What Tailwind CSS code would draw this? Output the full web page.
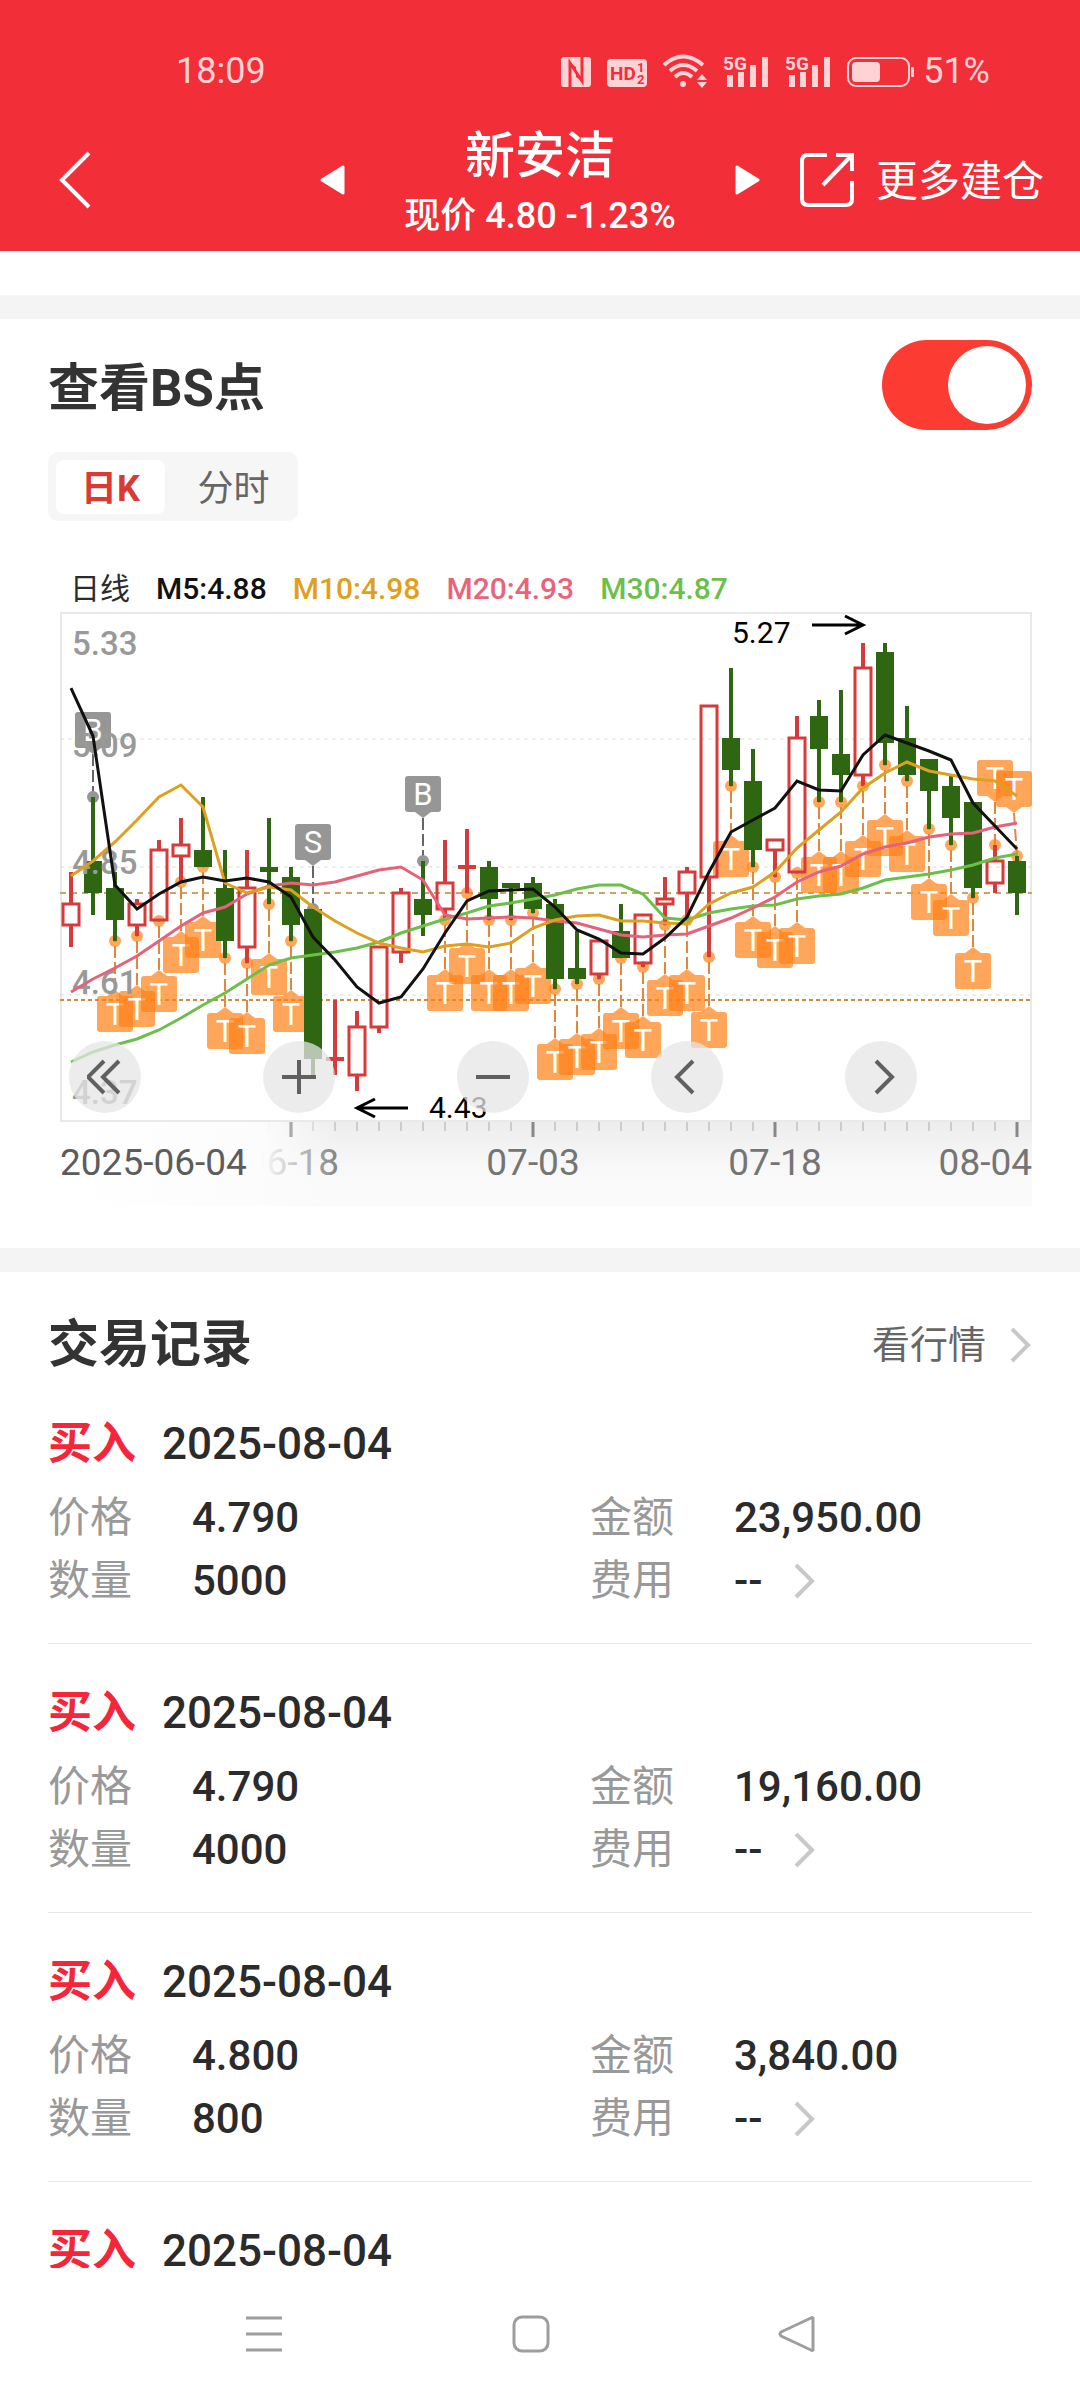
<!DOCTYPE html>
<html lang="zh-CN">
<head>
<meta charset="utf-8">
<meta name="viewport" content="width=device-width, initial-scale=1">
<title>新安洁</title>
<script src="https://cdn.jsdelivr.net/npm/@tailwindcss/browser@4"></script>
</head>
<body class="flex h-screen flex-col bg-white font-['Roboto','Noto_Sans_CJK_SC',sans-serif] text-[#2b2b2b]">

<header class="shrink-0 bg-[#f22f38] text-white">
  <div class="flex h-28 items-center justify-between pt-[30px] pr-[90px] pl-44 text-[36px] text-[#ffd3d5]">
    <time>18:09</time>
    <div class="flex items-center gap-4">
      <svg class="h-[34px] w-[30px]" viewBox="0 0 30 34" aria-label="NFC">
        <rect y="3" width="30" height="30" rx="3" fill="#ffd3d5"/>
        <path d="M9 33V9L21 27V3" fill="none" stroke="#f22f38" stroke-width="3"/>
        <path d="M9 9l6 4v6zM21 27l-6-4v-6z" fill="#f22f38"/>
      </svg>
      <svg class="h-[34px] w-10" viewBox="0 0 40 34" font-weight="700" fill="#f22f38" aria-label="HD">
        <rect y="5" width="40" height="28" rx="4" fill="#ffd3d5"/>
        <text x="3" y="26" font-size="19">HD</text>
        <text x="30" y="18" font-size="13">1</text>
        <text x="30" y="30" font-size="13">2</text>
      </svg>
      <svg class="h-[34px] w-11" viewBox="0 0 44 34" fill="none" stroke="#ffd3d5" stroke-width="4" aria-label="Wi-Fi">
        <path d="M1 11Q20-6 40 11M7 17Q20 5 34 17M12 23Q20 15 29 23"/>
        <circle cx="20" cy="30" r="3" fill="#ffd3d5" stroke="none"/>
        <path d="M34 26h10l-5-6zM34 28h10l-5 6z" fill="#ffd3d5" stroke="none"/>
      </svg>
      <svg class="h-[34px] w-[46px]" viewBox="0 0 46 34" fill="#ffd3d5" aria-label="5G">
        <text x="0" y="16" font-size="19" font-weight="700">5G</text>
        <path d="M4 21h6v12H4zM15 18h6v15h-6zM27 11h6v22h-6zM39 3h6v30h-6z"/>
      </svg>
      <svg class="h-[34px] w-[46px]" viewBox="0 0 46 34" fill="#ffd3d5" aria-label="5G">
        <text x="0" y="16" font-size="19" font-weight="700">5G</text>
        <path d="M4 21h6v12H4zM15 18h6v15h-6zM27 11h6v22h-6zM39 3h6v30h-6z"/>
      </svg>
      <div class="flex items-center gap-2">
        <svg class="h-[34px] w-[68px]" viewBox="0 0 68 34" fill="#ffd3d5" aria-label="电量">
          <rect x="1" y="4" width="61" height="28" rx="8" fill="none" stroke="#ffd3d5" stroke-width="2"/>
          <rect x="5" y="8" width="28" height="20" rx="4"/>
          <rect x="64" y="13" width="3" height="10" rx="1"/>
        </svg>
        <span>51%</span>
      </div>
    </div>
  </div>
  <div class="grid h-[139px] grid-cols-[1fr_auto_1fr] items-center pb-1">
    <button class="ml-[58px] w-9" aria-label="返回">
      <svg class="h-[58px] w-9" viewBox="0 0 36 58" fill="none" stroke="#fff" stroke-width="4"><path d="M31 2L4 29l27 27"/></svg>
    </button>
    <div class="flex w-[440px] items-center justify-between">
      <button aria-label="上一只"><svg class="h-[30px] w-[25px]" viewBox="0 0 25 30" fill="#fff" stroke="#fff" stroke-width="3" stroke-linejoin="round"><path d="M23 2v26L2 15z"/></svg></button>
      <div class="pt-3 text-center">
        <h1 class="text-[50px] leading-[60px] font-medium">新安洁</h1>
        <p class="text-[36px] leading-[60px] font-medium">现价 4.80 -1.23%</p>
      </div>
      <button aria-label="下一只"><svg class="h-[30px] w-[25px]" viewBox="0 0 25 30" fill="#fff" stroke="#fff" stroke-width="3" stroke-linejoin="round"><path d="M2 2v26L23 15z"/></svg></button>
    </div>
    <button class="flex items-center justify-end gap-[22px] pr-9 text-[42px] leading-[60px]">
      <svg class="h-14 w-[54px]" viewBox="0 0 54 56" fill="none" stroke="#fff" stroke-width="4"><path d="M27 3H8q-6 0-6 6v38q0 6 6 6h38q6 0 6-6V29M36 3h16v16M52 3L23 33"/></svg>
      <span class="pt-1">更多建仓</span>
    </button>
  </div>
</header>

<main class="min-h-0 flex-1 overflow-y-auto [scrollbar-width:none]">
  <div class="h-11"></div>
  <div class="h-6 bg-[#f4f4f4]"></div>

  <section class="px-12 pt-[21px] pb-[42px]">
    <div class="flex items-center justify-between">
      <label for="bs" class="pt-2 text-[51px] leading-[60px] font-bold text-[#333]">查看BS点</label>
      <input id="bs" type="checkbox" role="switch" checked class="relative h-[90px] w-[150px] appearance-none rounded-full bg-gray-300 before:absolute before:top-[6px] before:left-[6px] before:size-[78px] before:rounded-full before:bg-white checked:bg-[#fc3c32] checked:before:left-[66px]">
    </div>
    <div class="mt-[22px] flex h-[69px] w-[250px] items-center rounded-[10px] bg-[#f6f6f6] px-2 text-[36px]">
      <button class="h-[54px] w-[109px] rounded-lg bg-white pt-1 leading-[50px] font-bold text-[#d93a34]">日K</button>
      <button class="h-[54px] flex-1 pt-1 pl-3 leading-[50px] text-[#666]">分时</button>
    </div>
    <div class="mt-[43px] ml-3">
      <div class="flex h-12 items-center gap-[26px] pl-[10px] text-[30px] font-medium">
        <span class="font-normal">日线</span>
        <span class="text-[#111]">M5:4.88</span>
        <span class="text-[#e0a01a]">M10:4.98</span>
        <span class="text-[#e8647b]">M20:4.93</span>
        <span class="text-[#6cbf4b]">M30:4.87</span>
      </div>
      <div class="relative">
        <svg id="chart" class="block w-full" viewBox="60 612 972 594" role="img" aria-label="日K线图"></svg>
        <div class="absolute inset-x-0 top-[429px] flex justify-between pr-[115px] pl-[9px]">
          <button class="flex size-[72px] items-center justify-center rounded-full bg-[#e6e6e6]/75" aria-label="最早"><svg class="size-9" viewBox="0 0 36 36" fill="none" stroke="#606060" stroke-width="4"><path d="M17 2L1 18l16 16M32 2L16 18l16 16"/></svg></button>
          <button class="flex size-[72px] items-center justify-center rounded-full bg-[#e6e6e6]/75" aria-label="放大"><svg class="size-9" viewBox="0 0 36 36" fill="none" stroke="#606060" stroke-width="4"><path d="M1 18h34M18 1v34"/></svg></button>
          <button class="flex size-[72px] items-center justify-center rounded-full bg-[#e6e6e6]/75" aria-label="缩小"><svg class="size-9" viewBox="0 0 36 36" fill="none" stroke="#606060" stroke-width="4"><path d="M1 18h34"/></svg></button>
          <button class="flex size-[72px] items-center justify-center rounded-full bg-[#e6e6e6]/75" aria-label="左移"><svg class="size-9" viewBox="0 0 36 36" fill="none" stroke="#606060" stroke-width="4"><path d="M24 2L8 18l16 16"/></svg></button>
          <button class="flex size-[72px] items-center justify-center rounded-full bg-[#e6e6e6]/75" aria-label="右移"><svg class="size-9" viewBox="0 0 36 36" fill="none" stroke="#606060" stroke-width="4"><path d="M13 2l16 16-16 16"/></svg></button>
        </div>
      </div>
    </div>
  </section>

  <div class="h-6 bg-[#f4f4f4]"></div>

  <section class="px-12 pt-[43px]">
    <div class="flex h-[60px] items-center justify-between">
      <h2 class="text-[51px] leading-[60px] font-bold text-[#333]">交易记录</h2>
      <a href="#" class="flex items-center gap-6 text-[38px] leading-[60px] text-[#666]">看行情
        <svg class="h-9 w-[22px]" viewBox="0 0 22 36" fill="none" stroke="#c8c8c8" stroke-width="4"><path d="M2 2l16 16L2 34"/></svg>
      </a>
    </div>

    <article class="border-b border-[#e8e8e8] pt-[37px] pb-[31px] text-[42px] font-medium">
      <h3 class="flex h-16 items-center gap-[26px] text-[44px]"><span class="font-bold text-[#f5263a]">买入</span><time>2025-08-04</time></h3>
      <dl class="mt-[10px] grid grid-cols-[144px_398px_144px_1fr] items-center leading-[63px]">
        <dt class="font-normal text-[#999]">价格</dt><dd>4.790</dd>
        <dt class="font-normal text-[#999]">金额</dt><dd>23,950.00</dd>
        <dt class="font-normal text-[#999]">数量</dt><dd>5000</dd>
        <dt class="font-normal text-[#999]">费用</dt><dd><button class="flex items-center"><span class="w-[60px] text-left">--</span><svg class="h-9 w-[22px]" viewBox="0 0 22 36" fill="none" stroke="#c8c8c8" stroke-width="4"><path d="M2 2l16 16L2 34"/></svg></button></dd>
      </dl>
    </article>

    <article class="border-b border-[#e8e8e8] pt-[37px] pb-[31px] text-[42px] font-medium">
      <h3 class="flex h-16 items-center gap-[26px] text-[44px]"><span class="font-bold text-[#f5263a]">买入</span><time>2025-08-04</time></h3>
      <dl class="mt-[10px] grid grid-cols-[144px_398px_144px_1fr] items-center leading-[63px]">
        <dt class="font-normal text-[#999]">价格</dt><dd>4.790</dd>
        <dt class="font-normal text-[#999]">金额</dt><dd>19,160.00</dd>
        <dt class="font-normal text-[#999]">数量</dt><dd>4000</dd>
        <dt class="font-normal text-[#999]">费用</dt><dd><button class="flex items-center"><span class="w-[60px] text-left">--</span><svg class="h-9 w-[22px]" viewBox="0 0 22 36" fill="none" stroke="#c8c8c8" stroke-width="4"><path d="M2 2l16 16L2 34"/></svg></button></dd>
      </dl>
    </article>

    <article class="border-b border-[#e8e8e8] pt-[37px] pb-[31px] text-[42px] font-medium">
      <h3 class="flex h-16 items-center gap-[26px] text-[44px]"><span class="font-bold text-[#f5263a]">买入</span><time>2025-08-04</time></h3>
      <dl class="mt-[10px] grid grid-cols-[144px_398px_144px_1fr] items-center leading-[63px]">
        <dt class="font-normal text-[#999]">价格</dt><dd>4.800</dd>
        <dt class="font-normal text-[#999]">金额</dt><dd>3,840.00</dd>
        <dt class="font-normal text-[#999]">数量</dt><dd>800</dd>
        <dt class="font-normal text-[#999]">费用</dt><dd><button class="flex items-center"><span class="w-[60px] text-left">--</span><svg class="h-9 w-[22px]" viewBox="0 0 22 36" fill="none" stroke="#c8c8c8" stroke-width="4"><path d="M2 2l16 16L2 34"/></svg></button></dd>
      </dl>
    </article>

    <article class="pt-[37px] font-medium">
      <h3 class="flex h-16 items-center gap-[26px] text-[44px]"><span class="font-bold text-[#f5263a]">买入</span><time>2025-08-04</time></h3>
    </article>
  </section>
</main>

<nav class="flex h-[132px] shrink-0 items-center justify-between bg-white pr-[264px] pl-[245px]">
  <button aria-label="最近任务"><svg class="size-[38px]" viewBox="0 0 38 38" stroke="#9e9e9e" stroke-width="3"><path d="M1 3h36M1 19h36M1 35h36"/></svg></button>
  <button aria-label="主屏幕"><svg class="size-[38px]" viewBox="0 0 38 38" fill="none" stroke="#9e9e9e" stroke-width="3"><rect x="2" y="2" width="34" height="34" rx="8"/></svg></button>
  <button aria-label="返回上一页"><svg class="size-[38px]" viewBox="0 0 38 38" fill="none" stroke="#9e9e9e" stroke-width="3" stroke-linejoin="round"><path d="M35 3v32q-1 1-2 0L3 21q-2-2 0-4L33 3q1-1 2 0z"/></svg></button>
</nav>

<script>
// Candles: [direction, high, body top, body bottom, low] in chart units
const candles = [
  ['u',872,903,926,947],['d',797,861,893,915],['d',872,888,920,941],['u',899,903,926,936],
  ['u',840,849,921,921],['u',818,844,857,882],['d',797,850,867,867],['d',850,888,941,958],
  ['u',850,887,948,963],['d',818,867,872,904],['d',867,877,925,941],['d',909,909,1059,1075],
  ['u',1000,1058,1060,1075],['u',1011,1026,1076,1091],['u',946,946,1028,1033],['u',888,892,953,963],
  ['d',861,899,915,936],['u',840,882,910,920],['u',829,866,868,893],['d',861,867,899,920],
  ['d',883,883,888,920],['d',877,883,909,913],['d',899,904,979,989],['d',931,968,979,984],
  ['u',940,940,975,979],['d',904,931,958,958],['u',914,914,964,967],['u',877,898,905,925],
  ['u',867,871,894,920],['u',705,705,878,957],['d',668,738,770,786],['d',749,781,850,867],
  ['u',839,839,851,877],['u',716,737,873,873],['d',700,716,749,802],['d',690,754,775,802],
  ['u',643,667,776,786],['d',643,652,743,765],['d',706,738,775,781],['d',759,759,791,829],
  ['d',775,786,818,845],['d',802,802,888,898],['u',845,860,884,893],['d',856,861,893,915]
];
const averages = {
  '#6cbf4b': [1062,1052,1045,1039,1030,1018,1005,993,979,965,958,955,952,948,942,933,926,919,913,906,903,899,895,889,885,885,894,918,920,913,909,906,905,899,896,894,888,880,877,874,870,865,858,854],
  '#e4637a': [992,979,968,956,941,926,913,907,894,886,883,885,882,876,870,867,880,915,919,918,917,918,921,923,929,935,937,935,934,926,918,908,897,882,872,866,854,847,843,837,834,833,827,823],
  '#dda021': [876,861,842,820,797,785,807,883,893,887,890,907,921,933,943,948,952,946,944,947,943,928,920,916,915,921,921,923,924,904,893,887,872,848,830,812,788,773,762,771,775,779,781,796],
  '#111111': [688,736,885,909,894,882,877,881,878,882,897,937,960,987,1003,997,969,933,901,891,890,889,907,930,939,953,954,938,917,872,832,820,808,781,790,791,755,735,743,751,760,803,826,849]
};
const x = i => 71 + 22 * i;
const out = [];
const line = (x1, y1, x2, y2, c, w, dash) =>
  out.push(`<line x1="${x1}" y1="${y1}" x2="${x2}" y2="${y2}" stroke="${c}" stroke-width="${w}"${dash ? ` stroke-dasharray="${dash}"` : ''}/>`);
const text = (s, tx, ty, size, c, weight, anchor = 'start') =>
  out.push(`<text x="${tx}" y="${ty}" font-size="${size}" fill="${c}" font-weight="${weight}" text-anchor="${anchor}">${s}</text>`);

// Frame and grid
out.push('<rect x="61" y="613" width="970" height="508" fill="none" stroke="#e9e9e9" stroke-width="2"/>');
[739, 867, 995].forEach(y => line(60, y, 1032, y, '#dcdcdc', 1, '4 4'));
line(60, 893, 1032, 893, '#c9a26c', 2, '6 5');
line(60, 1000, 1032, 1000, '#cf8b3c', 2, '4 3');

// Trade markers
function marker(i, letter, above, c, stem, opacity) {
  const cx = x(i), lx = Math.min(cx, 1014);
  const dot = above ? candles[i][1] : candles[i][4];
  const top = above ? dot - 85 : dot + 55;
  const tip = above ? top + 42 : top - 6;
  const base = above ? top + 36 : top;
  line(lx, tip, cx, dot, stem, 2, '12 4');
  out.push(`<circle cx="${cx}" cy="${dot}" r="6" fill="${c}" fill-opacity="${opacity}"/>`);
  out.push(`<g fill="${c}" fill-opacity="${opacity}"><rect x="${lx - 18}" y="${top}" width="36" height="36" rx="3"/><path d="M${lx - 8} ${base}h16L${lx} ${tip}z"/></g>`);
  text(letter, lx, top + 29, 31, '#fff', 400, 'middle');
}
marker(1, 'B', true, '#969696', '#666', 1);
marker(11, 'S', true, '#969696', '#666', 1);
marker(16, 'B', true, '#969696', '#666', 1);
for (let i = 2; i < 44; i++) {
  if (i > 10 && i < 17) continue;
  marker(i, 'T', i > 41, '#ff8016', '#e2873c', 0.7);
}

// Candles
candles.forEach(([dir, high, top, bottom, low], i) => {
  const cx = x(i);
  if (dir === 'd') {
    line(cx, high, cx, low, '#2f6612', 4);
    out.push(`<rect x="${cx - 9}" y="${top}" width="18" height="${bottom - top}" fill="#2f6612"/>`);
  } else {
    line(cx, high, cx, top, '#d63b3b', 4);
    line(cx, bottom, cx, low, '#d63b3b', 4);
    if (bottom - top < 4) line(cx - 9, top + 1, cx + 9, top + 1, '#d63b3b', 4);
    else out.push(`<rect x="${cx - 8}" y="${top + 1}" width="16" height="${bottom - top - 2}" fill="none" stroke="#d63b3b" stroke-width="3"/>`);
  }
});

[['5.33', 655], ['5.09', 757], ['4.85', 874], ['4.61', 994], ['4.37', 1104]].forEach(([s, y]) => text(s, 72, y, 33, '#999', 500));

for (const [c, ys] of Object.entries(averages))
  out.push(`<polyline points="${ys.map((y, i) => x(i) + ',' + y).join(' ')}" fill="none" stroke="${c}" stroke-width="3"/>`);

// High and low notes
text('5.27', 732, 643, 30, '#000', 400);
text('4.43', 429, 1118, 30, '#000', 400);
out.push('<path d="M812 625h50M845 616l18 9-18 9M408 1108h-50M375 1099l-18 9 18 9" fill="none" stroke="#000" stroke-width="3"/>');

// Date axis
out.push(`<defs><linearGradient id="shade" x2="0" y2="1"><stop offset="0" stop-color="#ededed"/><stop offset=".6" stop-color="#f9f9f9"/><stop offset="1" stop-color="#fafafa"/></linearGradient>
<linearGradient id="fade"><stop offset="0" stop-color="#fff"/><stop offset=".72" stop-color="#fcfcfc"/><stop offset="1" stop-color="#fafafa" stop-opacity="0"/></linearGradient></defs>`);
out.push('<rect x="60" y="1122" width="972" height="84" fill="url(#shade)"/>');
for (let i = 8; i < 44; i++) {
  const major = (i - 10) % 11 === 0;
  line(x(i), 1122, x(i), major ? 1137 : 1131, major ? '#888' : '#aaa', major ? 3 : 1);
}
text('06-18', 339, 1175, 37, '#808080', 400, 'end');
out.push('<rect x="60" y="1122" width="280" height="84" fill="url(#fade)"/>');
line(291, 1122, 291, 1137, '#aaa', 3);
text('2025-06-04', 60, 1175, 37, '#5c5c5c', 400);
text('07-03', 533, 1175, 37, '#757575', 400, 'middle');
text('07-18', 775, 1175, 37, '#757575', 400, 'middle');
text('08-04', 1032, 1175, 37, '#757575', 400, 'end');

document.getElementById('chart').innerHTML = out.join('');
</script>
</body>
</html>
